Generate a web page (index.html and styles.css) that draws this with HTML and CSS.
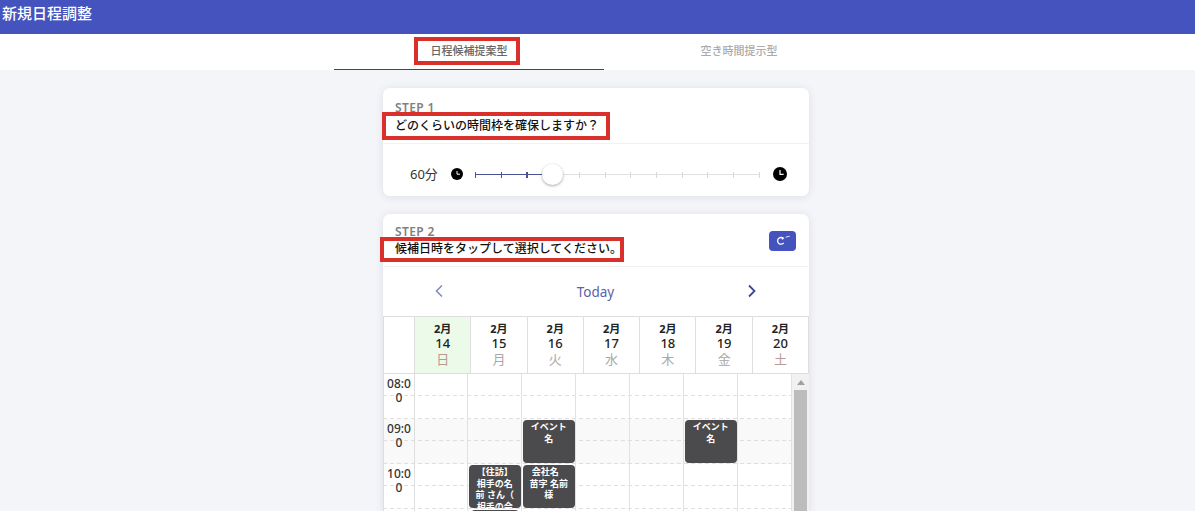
FILE: index.html
```html
<!DOCTYPE html>
<html lang="ja">
<head>
<meta charset="utf-8">
<title>新規日程調整</title>
<link rel="stylesheet" href="styles.css">
</head>
<body>
<header class="topbar"><h1 class="page-title">新規日程調整</h1></header>
<nav class="tabs">
  <div class="tab tab-active"><span class="tab-label">日程候補提案型</span><span class="mark mark-tab"></span></div>
  <div class="tab"><span class="tab-label">空き時間提示型</span></div>
</nav>
<main class="content">
  <section class="card">
    <div class="card-head">
      <div class="step">STEP 1</div>
      <div class="question">どのくらいの時間枠を確保しますか？</div>
      <span class="mark mark-q1"></span>
    </div>
    <div class="slider-row">
      <span class="duration">60分</span>
      <svg class="clock-s" viewBox="0 0 12 12"><circle cx="6" cy="6" r="6"/><path d="M6 3v3.2h3" fill="none" stroke="#fff" stroke-width="1"/></svg>
      <div class="slider">
        <div class="track"></div>
        <div class="track-on"></div>
        <div class="ticks">
          <i class="on"></i><i class="on"></i><i class="on thick"></i><i></i><i></i><i></i><i></i><i></i><i></i><i></i><i></i><i></i>
        </div>
        <div class="thumb"></div>
      </div>
      <svg class="clock-l" viewBox="0 0 14 14"><circle cx="7" cy="7" r="7"/><path d="M7 3v4.3h3.6" fill="none" stroke="#fff" stroke-width="1.2"/></svg>
    </div>
  </section>

  <section class="card card-cal">
    <div class="card-head head-2">
      <div>
        <div class="step">STEP 2</div>
        <div class="question">候補日時をタップして選択してください。</div>
      </div>
      <button class="refresh" type="button"><svg viewBox="0 0 14 10"><path d="M7.6 2.8A2.8 2.800 0 1 0 8 6.500" fill="none" stroke="#fff" stroke-width="1.100"/><path d="M6.200 1.400l2.400 1.200-2 1.600z" fill="#fff"/><path d="M9.600 1.800l3.400-.8" fill="none" stroke="#fff" stroke-width=".7"/></svg></button>
      <span class="mark mark-q2"></span>
    </div>
    <div class="cal-nav">
      <svg class="chev chev-prev" viewBox="0 0 10 14"><path d="M8 1.500 2.500 7 8 12.500" fill="none" stroke="currentColor" stroke-width="1.500"/></svg>
      <span class="today">Today</span>
      <svg class="chev chev-next" viewBox="0 0 10 14"><path d="M2 1.500 7.500 7 2 12.500" fill="none" stroke="currentColor" stroke-width="1.800"/></svg>
    </div>
    <div class="cal-head">
      <div class="day-blank"></div>
      <div class="day day-today"><b>2月</b><b class="num">14</b><span class="sun">日</span></div>
      <div class="day"><b>2月</b><b class="num">15</b><span>月</span></div>
      <div class="day"><b>2月</b><b class="num">16</b><span>火</span></div>
      <div class="day"><b>2月</b><b class="num">17</b><span>水</span></div>
      <div class="day"><b>2月</b><b class="num">18</b><span>木</span></div>
      <div class="day"><b>2月</b><b class="num">19</b><span>金</span></div>
      <div class="day"><b>2月</b><b class="num">20</b><span class="sat">土</span></div>
    </div>
    <div class="cal-body">
      <div class="grid">
        <div class="row">
          <div class="time">08:00</div>
          <div class="cell"></div><div class="cell"></div><div class="cell"></div><div class="cell"></div><div class="cell"></div><div class="cell"></div><div class="cell"></div>
        </div>
        <div class="row row-alt">
          <div class="time">09:00</div>
          <div class="cell"></div><div class="cell"></div>
          <div class="cell"><div class="event">イベント<br>名</div></div>
          <div class="cell"></div><div class="cell"></div>
          <div class="cell"><div class="event">イベント<br>名</div></div>
          <div class="cell"></div>
        </div>
        <div class="row">
          <div class="time">10:00</div>
          <div class="cell"></div>
          <div class="cell"><div class="event">【往訪】<br>相手の名<br>前 さん（<br>相手の会</div></div>
          <div class="cell"><div class="event">会社名&nbsp;&nbsp;&nbsp;<br>苗字 名前<br>様</div></div>
          <div class="cell"></div><div class="cell"></div><div class="cell"></div><div class="cell"></div>
        </div>
        <div class="row">
          <div class="time">11:00</div>
          <div class="cell"></div>
          <div class="cell"><div class="event event-narrow"></div></div>
          <div class="cell"></div><div class="cell"></div><div class="cell"></div><div class="cell"></div><div class="cell"></div>
        </div>
      </div>
      <div class="scrollbar"><span class="arrow"></span><span class="scroll-thumb"></span></div>
    </div>
  </section>
</main>
</body>
</html>
```
FILE: styles.css
```css
* { box-sizing: border-box; }
html, body { margin: 0; height: 511px; overflow: hidden; }
body {
  background: #f4f5f9;
  font-family: "Noto Sans", "Noto Sans CJK JP", sans-serif;
  color: #111;
}
.topbar { height: 34px; background: #4553be; padding: 3px 2px 0; }
.page-title { margin: 0; color: #fff; font-size: 15px; font-weight: 500; line-height: 20px; }
.tabs { height: 36px; background: #fff; padding-left: 334px; display: flex; }
.tab { position: relative; width: 270px; height: 36px; display: flex; align-items: center; justify-content: center; padding-bottom: 2px; }
.tab-label { font-size: 11px; font-weight: 500; color: #aaa; line-height: 16px; }
.tab-active { border-bottom: 1px solid #444857; }
.tab-active .tab-label { color: #666; }
.mark { position: absolute; border: 4px solid #d9302c; pointer-events: none; }
.mark-tab { left: 80px; top: 3px; width: 106px; height: 28px; }
.content { width: 426px; margin-left: 383px; padding-top: 18px; }
.card { background: #fff; border-radius: 7px; box-shadow: 0 1px 8px rgba(60, 64, 90, .12); margin-bottom: 18px; }
.card-head { position: relative; height: 56px; padding: 13px 12px 0; border-bottom: 1px solid #f2f2f4; }
.step { font-size: 12px; font-weight: 600; color: #808080; line-height: 13px; letter-spacing: .4px; }
.question { font-size: 12px; font-weight: 500; line-height: 16px; color: #111; margin-top: 4px; white-space: nowrap; }
.mark-q1 { left: -1px; top: 24px; width: 228px; height: 28px; }
.slider-row { height: 52px; position: relative; display: flex; align-items: center; padding-left: 27px; padding-top: 8px; }
.duration { width: 41px; font-size: 13px; color: #333; line-height: 16px; white-space: nowrap; }
.clock-s { width: 12px; height: 12px; fill: #000; }
.clock-l { width: 14px; height: 14px; fill: #000; margin-left: 13px; }
.slider { position: relative; width: 285px; height: 22px; margin-left: 12px; }
.track { position: absolute; left: 0; right: 0; top: 11px; height: 1px; background: #e0e0e0; }
.track-on { position: absolute; left: 0; width: 70px; top: 11px; height: 1px; background: #4a5294; }
.ticks { position: absolute; inset: 9px 0 auto 0; height: 6px; display: flex; justify-content: space-between; }
.ticks i { width: 1px; height: 6px; background: #d8d8d8; display: block; }
.ticks i.on { background: #4a5294; }
.ticks i.thick { width: 2px; }
.thumb { position: absolute; left: 67px; top: 1px; width: 21px; height: 21px; border-radius: 50%; background: #fff; box-shadow: 0 1px 3px rgba(0, 0, 0, .35); }
.head-2 { height: 53px; display: flex; justify-content: space-between; align-items: flex-start; padding: 11px 13px 0 12px; }
.head-2 .question { margin-top: 3px; }
.mark-q2 { left: -3px; top: 23px; width: 244px; height: 25px; }
.refresh { width: 27px; height: 20px; margin-top: 6px; padding: 0; border: 0; border-radius: 4px; background: #4553be; display: flex; align-items: center; justify-content: center; }
.refresh svg { width: 17px; height: 12px; }
.cal-nav { height: 49px; display: flex; align-items: center; position: relative; justify-content: center; padding-right: 1px; }
.today { font-size: 13.5px; color: #5a62a8; line-height: 18px; }
.chev { position: absolute; top: 17px; width: 10px; height: 14px; }
.chev-prev { left: 51px; color: #8087b8; }
.chev-next { left: 364px; color: #3e478f; }
.cal-head { height: 58px; display: grid; grid-template-columns: 32px repeat(7, 56.3px); border-top: 1px solid #dedede; border-bottom: 1px solid #dedede; }
.day-blank { border-left: 1px solid #dedede; border-right: 1px solid #dedede; }
.day { display: flex; flex-direction: column; align-items: center; font-size: 11px; line-height: 15px; padding-top: 4px; border-right: 1px solid #dedede; }
.day b { font-weight: 700; color: #222; }
.day .num { font-size: 13px; font-weight: 500; }
.day span { font-size: 13px; line-height: 17px; color: #a8a8a8; }
.day-today { background: #ecfaea; }
.day .sun { color: #b89a90; }
.day .sat { color: #b89a9a; }
.cal-body { display: flex; height: 140px; overflow: hidden; }
.grid { width: 409px; }
.row {
  display: grid;
  grid-template-columns: 32px 53px repeat(6, 54px);
  height: 45px;
  background-image:
    repeating-linear-gradient(90deg, #dfdfdf 0 4px, transparent 4px 7px),
    repeating-linear-gradient(90deg, #dfdfdf 0 4px, transparent 4px 7px);
  background-size: 100% 1px, 100% 1px;
  background-position: 0 21px, 0 44px;
  background-repeat: no-repeat;
}
.row-alt { background-color: #f9f9f9; }
.time { font-size: 12px; font-weight: 500; color: #333; line-height: 14px; text-align: center; padding: 3px 2px 0; word-break: break-all; border-left: 1px solid #dedede; border-right: 1px solid #dedede; }
.cell { position: relative; border-right: 1px solid #e2e2e2; }
.event { position: absolute; left: 1px; right: .5px; top: 1px; height: 43px; padding: 1px 2px 0; overflow: hidden; background: #4b4b4d; border-radius: 4px; color: #fff; font-size: 9px; font-weight: 700; line-height: 11.5px; text-align: center; white-space: nowrap; z-index: 1; }
.event-narrow { left: 3px; right: 2px; }
.scrollbar { width: 17px; background: #f1f1f1; display: flex; flex-direction: column; align-items: center; padding-top: 6px; }
.arrow { width: 0; height: 0; flex: none; border-left: 4px solid transparent; border-right: 4px solid transparent; border-bottom: 5px solid #a0a0a0; }
.scroll-thumb { width: 13px; height: 200px; margin-top: 5px; background: #bcbcbc; flex: none; }
```
